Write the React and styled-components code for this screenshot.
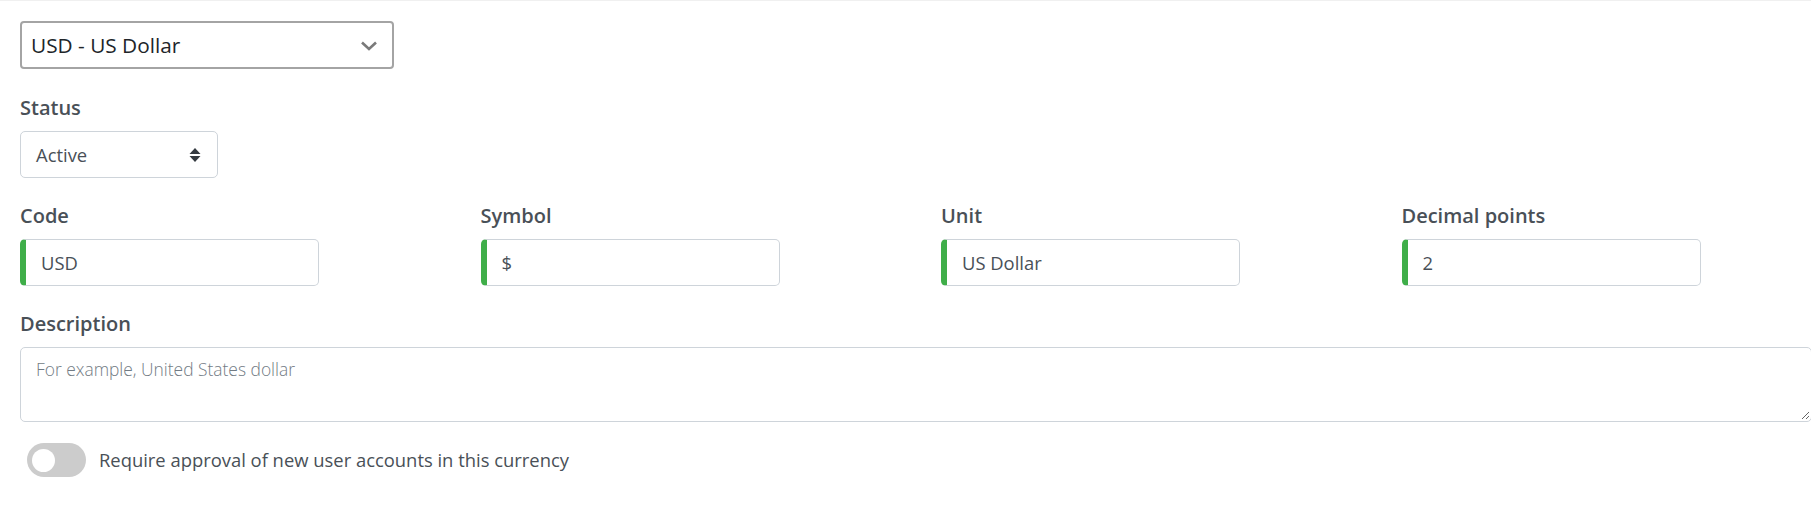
import React from 'react'
import styled, { createGlobalStyle } from 'styled-components'

const GlobalStyle = createGlobalStyle`
    html, body {
        margin: 0;
        padding: 0;
        background: #fff;
        overflow: hidden;
    }
    body {
        font-family: "Open Sans", "Noto Sans", "Liberation Sans", sans-serif;
        font-size: 18.4px;
        line-height: 30px;
        color: #495057;
    }
`

const fields = [
    { label: 'Code', value: 'USD' },
    { label: 'Symbol', value: '$' },
    { label: 'Unit', value: 'US Dollar' },
    { label: 'Decimal points', value: '2' },
]

const App = () => {
    return (
        <React.Fragment>
            <GlobalStyle />
            <Page>
                <CurrencyPicker>
                    <span>USD - US Dollar</span>
                    <svg width="18" height="14" viewBox="0 0 18 14">
                        <path d="M2 3.5 L9 10 L16 3.5" fill="none" stroke="#7a7a7a" strokeWidth="2.6" />
                    </svg>
                </CurrencyPicker>

                <Group>
                    <Label>Status</Label>
                    <StatusSelect>
                        <span>Active</span>
                        <svg width="12" height="16" viewBox="0 0 12 16">
                            <path d="M6 1 L11.5 7 L0.5 7 Z" fill="#343a40" />
                            <path d="M6 15 L11.5 9 L0.5 9 Z" fill="#343a40" />
                        </svg>
                    </StatusSelect>
                </Group>

                <FieldRow>
                    {fields.map((field) => (
                        <Column key={field.label}>
                            <Label>{field.label}</Label>
                            <RequiredInput>{field.value}</RequiredInput>
                        </Column>
                    ))}
                </FieldRow>

                <Group>
                    <Label>Description</Label>
                    <TextArea>
                        <Placeholder>For example, United States dollar</Placeholder>
                        <Grip width="10" height="10" viewBox="0 0 10 10">
                            <path d="M9 2 L2 9 M9 6 L6 9" stroke="#666" strokeWidth="1" />
                        </Grip>
                    </TextArea>
                </Group>

                <SwitchRow>
                    <Switch>
                        <Knob />
                    </Switch>
                    <SwitchText>Require approval of new user accounts in this currency</SwitchText>
                </SwitchRow>
            </Page>
        </React.Fragment>
    )
}

const Page = styled.div`
    width: 1811px;
    height: 522px;
    box-sizing: border-box;
    border-top: 1px solid #f0f0f0;
    padding: 20px 0 0 20px;
`

const CurrencyPicker = styled.div`
    width: 374px;
    height: 48px;
    box-sizing: border-box;
    border: 2px solid #a4a4a4;
    border-radius: 4px;
    display: flex;
    align-items: center;
    justify-content: space-between;
    padding: 0 14px 0 9px;
    margin-bottom: 22px;
    font-size: 20.8px;
    color: #212529;

    svg {
        margin-top: 2px;
    }
`

const Group = styled.div`
    margin-bottom: 21px;
`

const Label = styled.div`
    font-size: 20px;
    font-weight: 600;
    color: #495057;
    height: 30px;
    padding-top: 2px;
    margin-bottom: 8px;
`

const StatusSelect = styled.div`
    width: 198px;
    height: 47px;
    box-sizing: border-box;
    border: 1px solid #ced4da;
    border-radius: 5px;
    display: flex;
    align-items: center;
    justify-content: space-between;
    padding: 0 16px 0 15px;
    color: #495057;
`

const FieldRow = styled.div`
    display: grid;
    grid-template-columns: repeat(4, 460.5px);
    margin-bottom: 21px;
`

const Column = styled.div`
    display: flex;
    flex-direction: column;
`

const RequiredInput = styled.div`
    width: 299px;
    height: 47px;
    box-sizing: border-box;
    border: 1px solid #ced4da;
    border-left: 6px solid #3fae49;
    border-radius: 5px;
    display: flex;
    align-items: center;
    padding: 0 15px;
    color: #495057;
`

const TextArea = styled.div`
    position: relative;
    width: 1792px;
    height: 75px;
    box-sizing: border-box;
    border: 1px solid #ced4da;
    border-radius: 5px;
    padding: 6px 15px;
`

const Placeholder = styled.div`
    font-size: 17.4px;
    font-weight: 300;
    color: #727b84;
`

const Grip = styled.svg`
    position: absolute;
    right: 1px;
    bottom: 1px;
`

const SwitchRow = styled.div`
    display: flex;
    align-items: center;
    padding-left: 7px;
    gap: 13px;
`

const Switch = styled.div`
    width: 59px;
    height: 34px;
    border-radius: 17px;
    background: #cccccc;
    display: flex;
    align-items: center;
    padding-left: 5px;
    box-sizing: border-box;
`

const Knob = styled.div`
    width: 23px;
    height: 23px;
    border-radius: 50%;
    background: #fff;
`

const SwitchText = styled.div`
    color: #495057;
`

export default App
